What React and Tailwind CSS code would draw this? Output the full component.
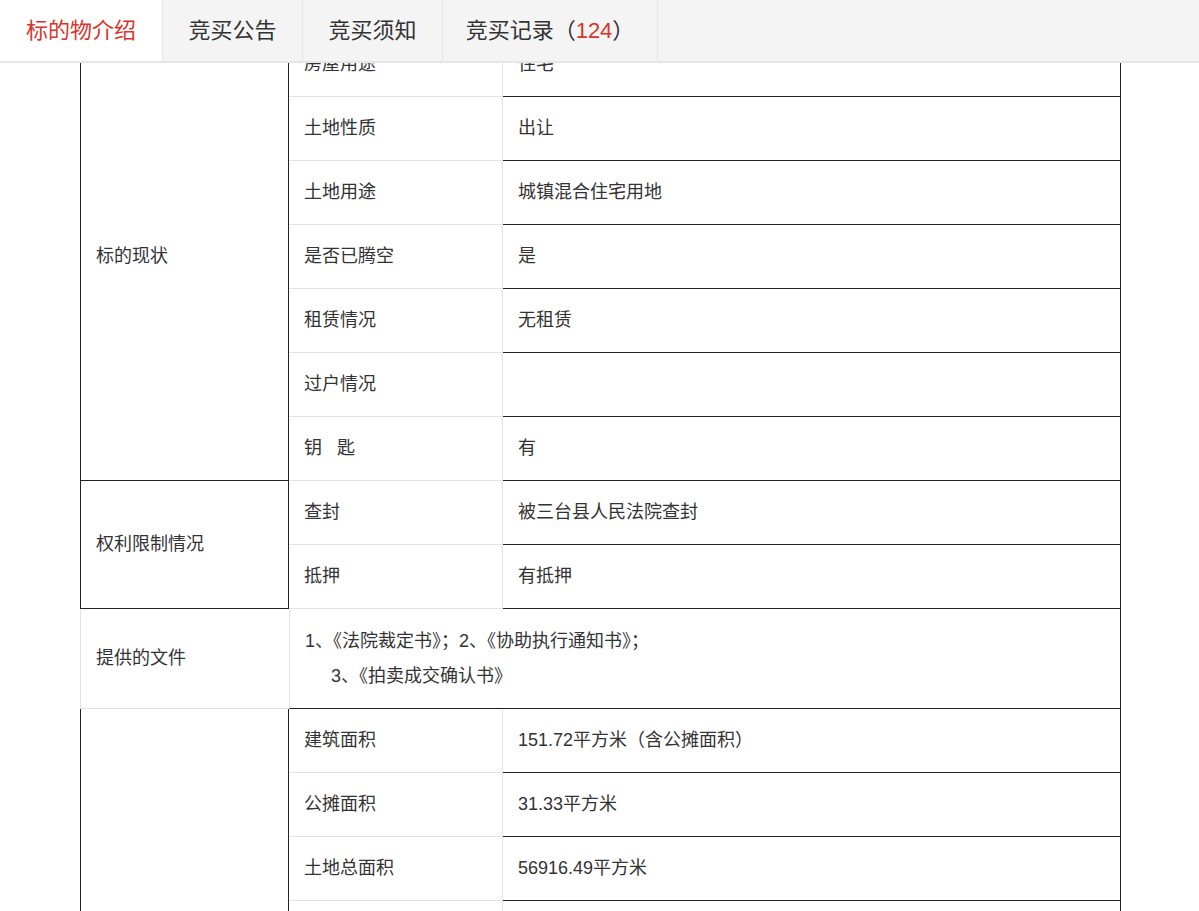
import React from "react";

const D = "border-[#222]";
const L = "border-[#e3e3e3]";

function Row({ c1, label, value, last, bDark }) {
  return (
    <tr className="h-[64px]">
      {c1}
      <td className={`border-r border-b ${L} pl-[15px] align-middle`}>{label}</td>
      <td className={`border-r border-b ${D} pl-[15px] align-middle`}>{value}</td>
    </tr>
  );
}

export default function App() {
  const secA = [
    ["房屋用途", "住宅"],
    ["土地性质", "出让"],
    ["土地用途", "城镇混合住宅用地"],
    ["是否已腾空", "是"],
    ["租赁情况", "无租赁"],
    ["过户情况", ""],
    ["钥\u00a0\u00a0\u00a0匙", "有"],
  ];
  const secD = [
    ["建筑面积", "151.72平方米（含公摊面积）"],
    ["公摊面积", "31.33平方米"],
    ["土地总面积", "56916.49平方米"],
    ["", ""],
  ];
  return (
    <div
      className="w-[1199px] h-[911px] overflow-hidden bg-white text-[#333] relative"
      style={{ fontFamily: '"Liberation Sans","Noto Sans CJK SC",sans-serif' }}
    >
      <div className="absolute top-0 left-0 right-0 h-[63px] z-10 flex bg-[#f4f4f4] border-b-[2px] border-[#e6e6e6] text-[22px]">
        <div className="w-[162px] bg-white text-[#d9342b] flex items-center justify-center">标的物介绍</div>
        <div className="w-[140px] border-l border-[#e6e6e6] flex items-center justify-center">竞买公告</div>
        <div className="w-[140px] border-l border-[#e6e6e6] flex items-center justify-center">竞买须知</div>
        <div className="w-[216px] border-l border-r border-[#e6e6e6] flex items-center justify-center">
          竞买记录（<span className="text-[#d9342b]">124</span>）
        </div>
      </div>
      <div className="pl-[80px] pt-[33px] text-[18px]">
        <table className="border-separate border-spacing-0 w-[1041px]">
          <colgroup>
            <col className="w-[209px]" />
            <col className="w-[214px]" />
            <col />
          </colgroup>
          <tbody>
            {secA.map(([a, b], i) => (
              <Row
                key={a}
                label={a}
                value={b}
                c1={
                  i === 0 ? (
                    <td rowSpan={7} className={`border-l border-r border-b ${D} pl-[15px]`}>标的现状</td>
                  ) : null
                }
              />
            ))}
            {[["查封", "被三台县人民法院查封"], ["抵押", "有抵押"]].map(([a, b], i) => (
              <Row
                key={a}
                label={a}
                value={b}
                c1={
                  i === 0 ? (
                    <td rowSpan={2} className={`border-l border-r border-b ${D} pl-[15px]`}>权利限制情况</td>
                  ) : null
                }
              />
            ))}
            <tr className="h-[100px]">
              <td className={`border-l border-b ${L} pl-[15px]`}>提供的文件</td>
              <td colSpan={2} className={`border-l border-r border-b ${L} border-r-[#222] border-b-[#222] pl-[15px] leading-[35px]`}>
                <div>1、《法院裁定书》；2、《协助执行通知书》；</div>
                <div className="pl-[26px]">3、《拍卖成交确认书》</div>
              </td>
            </tr>
            {secD.map(([a, b], i) => (
              <Row
                key={i}
                label={a}
                value={b}
                c1={
                  i === 0 ? (
                    <td rowSpan={4} className={`border-l border-r border-b ${D}`}></td>
                  ) : null
                }
              />
            ))}
          </tbody>
        </table>
      </div>
    </div>
  );
}
